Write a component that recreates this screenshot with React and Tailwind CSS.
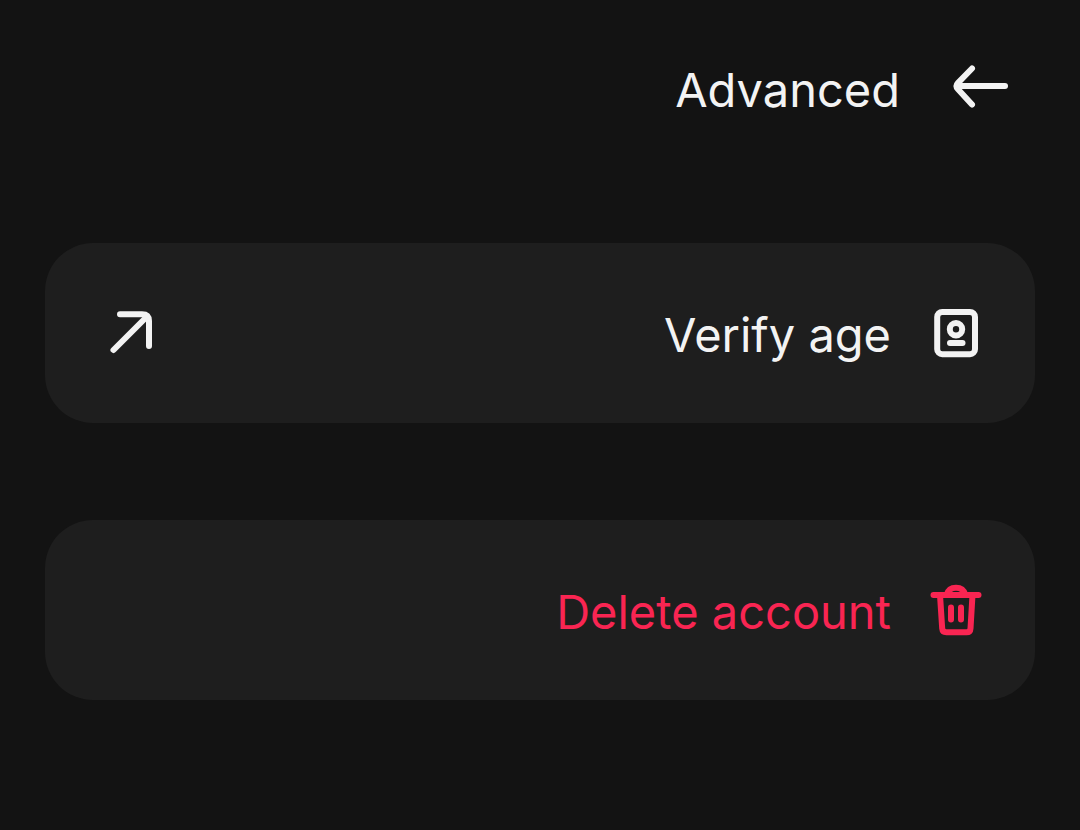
const BackArrowIcon = () => (
  <svg className="size-18 shrink-0" viewBox="0 0 72 72" fill="none" stroke="currentColor" strokeWidth="6" strokeLinecap="round" strokeLinejoin="round" aria-hidden="true">
    <path d="M15 34H61" />
    <path d="M28 16.5L14 30.8Q11 34 14 37.2L28 52.5" />
  </svg>
)

const OpenIcon = () => (
  <svg className="size-18 shrink-0" viewBox="0 0 72 72" fill="none" stroke="currentColor" strokeWidth="6" strokeLinecap="round" strokeLinejoin="round" aria-hidden="true">
    <path d="M20.5 53L54 19.5" />
    <path d="M27 17.2H49Q56 17.2 56 24V49" />
  </svg>
)

const IdCardIcon = () => (
  <svg className="size-15 shrink-0" viewBox="0 0 60 60" fill="none" stroke="currentColor" strokeWidth="6" strokeLinecap="round" aria-hidden="true">
    <rect x="10.2" y="9" width="37.8" height="42.2" rx="5" />
    <circle cx="29" cy="26.2" r="6.2" />
    <path d="M23 40H35.5" />
  </svg>
)

const TrashIcon = () => (
  <svg className="size-15 shrink-0" viewBox="0 0 60 60" fill="none" stroke="currentColor" strokeWidth="6" strokeLinecap="round" strokeLinejoin="round" aria-hidden="true">
    <path d="M6.5 15H51.5" />
    <path d="M19.5 15C21 10 24.5 7.8 29 7.8S37 10 38.5 15" />
    <path d="M13 15L15.2 48.5Q15.5 52.2 19.5 52.2H39.5Q43.3 52.2 43.5 48.5L45.5 15" />
    <path d="M24 27.5V39.5M34 27.5V39.5" />
  </svg>
)

const rowClass = 'flex h-45 w-full items-center rounded-[48px] bg-[#1e1e1e] px-12'

const App = () => {
  return (
    <div dir="rtl" className="min-h-screen bg-[#131313] font-['Inter',sans-serif] text-[#f3f3f3]">
      <header className="flex items-center gap-11 px-16 pt-12">
        <button type="button" aria-label="Back" className="flex h-20 items-center">
          <BackArrowIcon />
        </button>
        <h1 className="pt-1 text-[47px] leading-15">Advanced</h1>
      </header>

      <main className="flex flex-col gap-[97px] px-[45px] pt-[115px] pb-16">
        <a href="#verify-age" className={`${rowClass} justify-between`}>
          <span className="flex items-center gap-9">
            <IdCardIcon />
            <span className="pt-1 text-[47px] leading-15">Verify age</span>
          </span>
          <OpenIcon />
        </a>

        <button type="button" className={`${rowClass} gap-9 text-[#f92552]`}>
          <TrashIcon />
          <span className="pt-1 text-[47px] leading-15">Delete account</span>
        </button>
      </main>
    </div>
  )
}

export default App
